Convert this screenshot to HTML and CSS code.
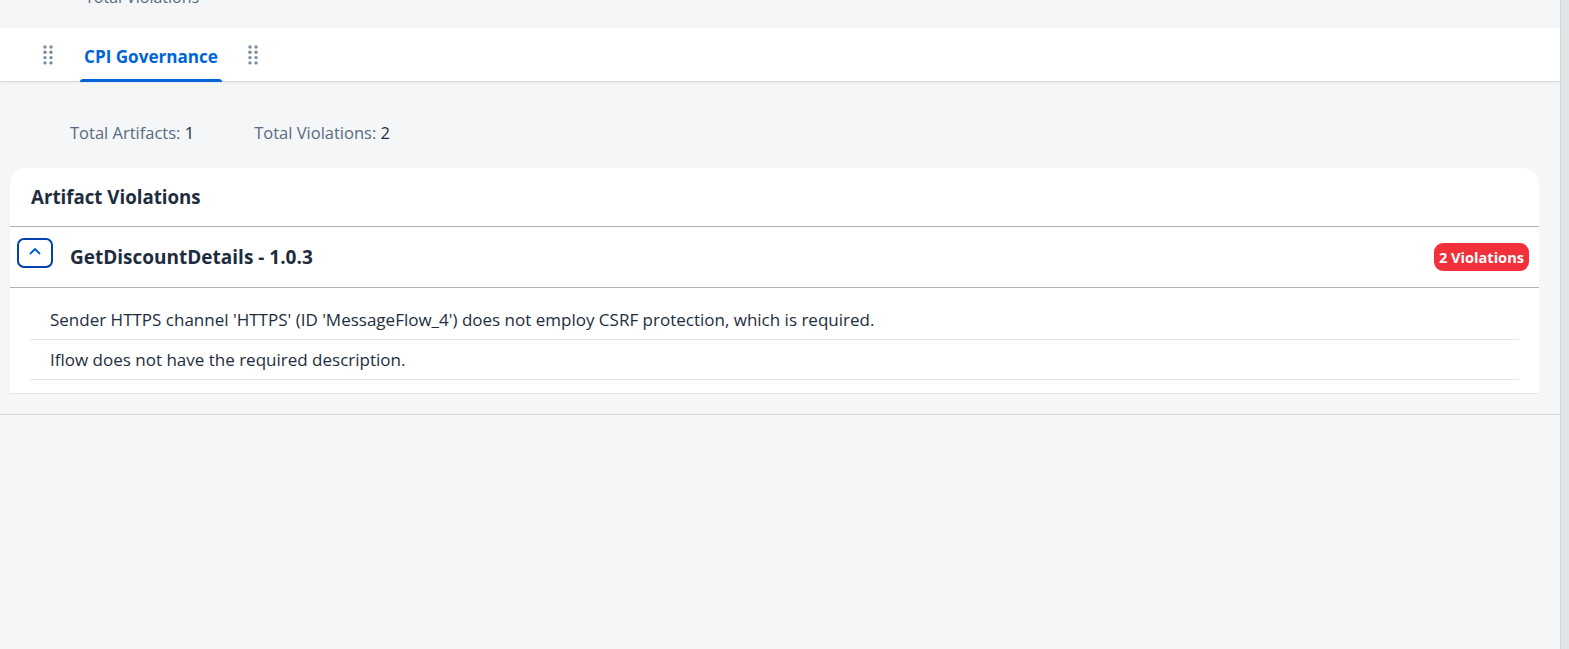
FILE: index.html
```html
<!DOCTYPE html>
<html>
<head>
<meta charset="utf-8">
<link rel="stylesheet" href="styles.css">
</head>
<body>
<div class="shell">
  <main class="page">
    <div class="prev-strip"><span class="prev-text">Total Violations</span></div>
    <nav class="tabbar">
      <span class="grip"><svg width="10" height="20" viewBox="0 0 10 20"><g fill="#7a8da1"><circle cx="2" cy="2" r="1.7"/><circle cx="8" cy="2" r="1.7"/><circle cx="2" cy="7.3" r="1.7"/><circle cx="8" cy="7.3" r="1.7"/><circle cx="2" cy="12.6" r="1.7"/><circle cx="8" cy="12.6" r="1.7"/><circle cx="2" cy="17.9" r="1.7"/><circle cx="8" cy="17.9" r="1.7"/></g></svg></span>
      <span class="tab active">CPI Governance</span>
      <span class="grip"><svg width="10" height="20" viewBox="0 0 10 20"><g fill="#7a8da1"><circle cx="2" cy="2" r="1.7"/><circle cx="8" cy="2" r="1.7"/><circle cx="2" cy="7.3" r="1.7"/><circle cx="8" cy="7.3" r="1.7"/><circle cx="2" cy="12.6" r="1.7"/><circle cx="8" cy="12.6" r="1.7"/><circle cx="2" cy="17.9" r="1.7"/><circle cx="8" cy="17.9" r="1.7"/></g></svg></span>
    </nav>
    <section class="content">
      <div class="stats">
        <span class="stat"><span class="lbl">Total Artifacts:</span> <span class="val">1</span></span>
        <span class="stat"><span class="lbl">Total Violations:</span> <span class="val">2</span></span>
      </div>
      <div class="card">
        <div class="card-head">Artifact Violations</div>
        <div class="artifact">
          <button class="toggle"><svg width="14" height="10" viewBox="0 0 14 10"><path d="M2.5 7.5 L7 3 L11.5 7.5" fill="none" stroke="#0064d9" stroke-width="1.8" stroke-linecap="round" stroke-linejoin="round"/></svg></button>
          <span class="artifact-name">GetDiscountDetails - 1.0.3</span>
          <span class="badge">2 Violations</span>
        </div>
        <ul class="violations">
          <li>Sender HTTPS channel 'HTTPS' (ID 'MessageFlow_4') does not employ CSRF protection, which is required.</li>
          <li>Iflow does not have the required description.</li>
        </ul>
      </div>
    </section>
  </main>
  <div class="scroll-strip"></div>
</div>
</body>
</html>
```
FILE: styles.css
```css
* { box-sizing: border-box; }
html, body { margin: 0; padding: 0; height: 100%; }
body {
  background: #f5f6f7;
  font-family: "Open Sans", "Liberation Sans", Arial, sans-serif;
  color: #1d2d3e;
  overflow: hidden;
}
.shell {
  display: flex;
  height: 100%;
}
.page {
  flex: 1;
  min-width: 0;
}
.scroll-strip {
  width: 9px;
  background: #e1e4e7;
  border-left: 1px solid #d3d7db;
}
.prev-strip {
  height: 28px;
  overflow: hidden;
  padding-left: 85px;
}
.prev-text {
  display: block;
  margin-top: -13px;
  font-size: 16px;
  line-height: 20px;
  color: #556b82;
}
.tabbar {
  height: 54px;
  background: #fff;
  border-bottom: 1px solid #d9dadb;
  box-shadow: 0 1px 2px rgba(0,0,0,0.06);
  display: flex;
  align-items: center;
  padding-left: 43px;
}
.grip { display: flex; align-items: center; height: 20px; margin-top: 1px; }
.tab {
  position: relative;
  height: 53px;
  display: flex;
  align-items: center;
  padding: 3px 4px 0;
  margin: 0 26px 0 27px;
  font-size: 17.1px;
  font-weight: 700;
  color: #0064d9;
}
.tab.active::after {
  content: "";
  position: absolute;
  left: 0;
  right: 0;
  bottom: -1px;
  height: 3px;
  background: #0064d9;
  border-radius: 3px 3px 0 0;
}
.content {
  padding: 40px 21px 20px 10px;
  border-bottom: 1px solid #d9dadb;
}
.stats {
  display: flex;
  gap: 60px;
  padding-left: 60px;
  font-size: 16.5px;
  line-height: 22px;
  margin-bottom: 24px;
}
.lbl { color: #556b82; }
.val { color: #1d2d3e; }
.card {
  background: #fff;
  border-radius: 16px 16px 0 0;
  border-bottom: 1px solid #e5e5e5;
  padding-bottom: 13px;
}
.card-head {
  height: 59px;
  display: flex;
  align-items: center;
  padding-left: 21px;
  font-size: 18.7px;
  line-height: 24px;
  font-weight: 700;
  border-bottom: 1px solid #a9b4be;
}
.artifact {
  height: 61px;
  display: flex;
  align-items: center;
  padding: 0 10px 0 7px;
  border-bottom: 1px solid #a9b4be;
}
.toggle {
  width: 36px;
  height: 30px;
  margin-top: -8px;
  border: 2px solid #0040b0;
  border-radius: 7px;
  background: #fff;
  display: flex;
  align-items: center;
  justify-content: center;
  padding: 0 0 4px;
}
.artifact-name {
  margin-left: 17px;
  margin-top: -1px;
  font-size: 19px;
  line-height: 24px;
  font-weight: 700;
  flex: 1;
}
.badge {
  background: #f1303a;
  color: #fff;
  font-size: 14.6px;
  font-weight: 700;
  height: 28px;
  line-height: 28px;
  padding: 0 5px;
  border-radius: 9px;
}
.violations {
  list-style: none;
  margin: 12px 20px 0;
  padding: 0;
}
.violations li {
  height: 40px;
  display: flex;
  align-items: center;
  padding-left: 20px;
  padding-top: 1px;
  font-size: 17px;
  line-height: 20px;
  border-bottom: 1px solid #e5e5e5;
}
```
